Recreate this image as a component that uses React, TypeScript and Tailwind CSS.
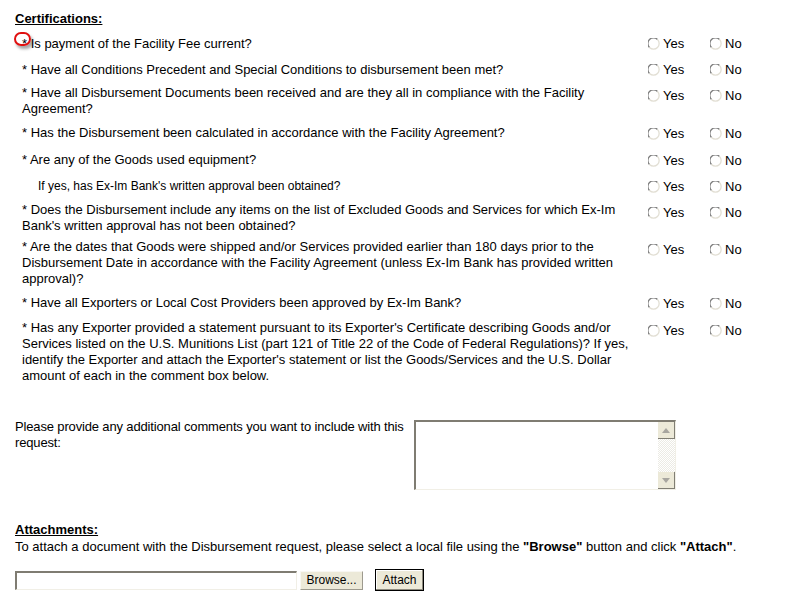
import React from 'react';

type Question = {
  text: string;
  small?: boolean;
  ro: number;
  pb: string;
};

const questions: Question[] = [
  { text: '* Is payment of the Facility Fee current?', ro: 2, pb: 'pb-[10px]' },
  {
    text: '* Have all Conditions Precedent and Special Conditions to disbursement been met?',
    ro: 2,
    pb: 'pb-[7px]',
  },
  {
    text: '* Have all Disbursement Documents been received and are they all in compliance with the Facility Agreement?',
    ro: 5,
    pb: 'pb-[8px]',
  },
  {
    text: '* Has the Disbursement been calculated in accordance with the Facility Agreement?',
    ro: 3,
    pb: 'pb-[10px]',
  },
  { text: '* Are any of the Goods used equipment?', ro: 3, pb: 'pb-[9px]' },
  { text: "If yes, has Ex-Im Bank's written approval been obtained?", small: true, ro: 3, pb: 'pb-[7px]' },
  {
    text: "* Does the Disbursement include any items on the list of Excluded Goods and Services for which Ex-Im Bank's written approval has not been obtained?",
    ro: 5,
    pb: 'pb-[5px]',
  },
  {
    text: '* Are the dates that Goods were shipped and/or Services provided earlier than 180 days prior to the Disbursement Date in accordance with the Facility Agreement (unless Ex-Im Bank has provided written approval)?',
    ro: 5,
    pb: 'pb-[8px]',
  },
  {
    text: '* Have all Exporters or Local Cost Providers been approved by Ex-Im Bank?',
    ro: 3,
    pb: 'pb-[8px]',
  },
  {
    text: "* Has any Exporter provided a statement pursuant to its Exporter's Certificate describing Goods and/or Services listed on the U.S. Munitions List (part 121 of Title 22 of the Code of Federal Regulations)? If yes, identify the Exporter and attach the Exporter's statement or list the Goods/Services and the U.S. Dollar amount of each in the comment box below.",
    ro: 5,
    pb: 'pb-[8px]',
  },
];

function Radio() {
  return (
    <svg width="12" height="12" viewBox="0 0 12 12" className="shrink-0">
      <circle cx="6" cy="6" r="5.5" fill="#ffffff" />
      <path d="M1.5 9.5 A5 5 0 0 1 9.5 1.5" fill="none" stroke="#7c7c7c" strokeWidth="1.3" />
      <path d="M9.5 1.5 A5 5 0 0 1 1.5 9.5" fill="none" stroke="#e2dfd4" strokeWidth="1.3" />
    </svg>
  );
}

function YesNo({ offset }: { offset: number }) {
  return (
    <div className="flex items-start" style={{ marginTop: offset - 2 }}>
      <div className="flex items-center w-[62px]">
        <Radio />
        <span className="ml-[3px]">Yes</span>
      </div>
      <div className="flex items-center">
        <Radio />
        <span className="ml-[3px]">No</span>
      </div>
    </div>
  );
}

function Arrow({ up }: { up?: boolean }) {
  return (
    <svg width="8" height="5" viewBox="0 0 8 5">
      <polygon points={up ? '0,5 8,5 4,0' : '0,0 8,0 4,5'} fill="#a8a6a0" />
    </svg>
  );
}

export default function App() {
  return (
    <div className="relative min-h-screen bg-white text-black pl-[15px] pt-[11px] text-[13px] leading-[16px] font-['Liberation_Sans',Arial,sans-serif]">
      <div className="font-bold underline">Certifications:</div>

      {/* Red annotation circle round first asterisk */}
      <div className="absolute left-[14px] top-[32px] w-[17px] h-[14px] rounded-full border-2 border-[#e01010] shadow-[2px_3px_3px_rgba(0,0,0,0.35)] pointer-events-none"></div>

      <div className="mt-[9px] flex flex-col">
        {questions.map((q, i) => (
          <div key={i} className={'flex ' + q.pb}>
            <div
              className={
                q.small
                  ? 'w-[633px] pl-[23px] text-[12px]'
                  : 'w-[633px] pl-[7px] pr-[10px]'
              }
            >
              {q.text}
            </div>
            <YesNo offset={q.ro} />
          </div>
        ))}
      </div>

      {/* Comments */}
      <div className="mt-[27px] flex items-start">
        <div className="w-[399px] tracking-[-0.15px]">
          Please provide any additional comments you want to include with this request:
        </div>
        <div className="flex w-[262px] h-[70px] mt-[1px] border-t-2 border-l-2 border-b border-r border-t-[#7f7c72] border-l-[#7f7c72] border-b-[#f1efe6] border-r-[#f1efe6] bg-white">
          <div className="flex-1"></div>
          <div className="w-[17px] flex flex-col bg-[repeating-conic-gradient(#ecebe4_0%_25%,#ffffff_0%_50%)] bg-[length:2px_2px]">
            <div className="h-[17px] flex items-center justify-center bg-[#ece9d8] border-r border-b border-[#807e74]">
              <Arrow up />
            </div>
            <div className="flex-1"></div>
            <div className="h-[17px] flex items-center justify-center bg-[#ece9d8] border-r border-b border-[#807e74]">
              <Arrow />
            </div>
          </div>
        </div>
      </div>

      {/* Attachments */}
      <div className="mt-[32px] font-bold underline">Attachments:</div>
      <div className="mt-[1px]">
        To attach a document with the Disbursement request, please select a local file using the{' '}
        <b>"Browse"</b> button and click <b>"Attach"</b>.
      </div>

      <div className="mt-[14px] flex items-center">
        <div className="w-[282px] h-[19px] border-t-2 border-l-2 border-b border-r border-t-[#7f7c72] border-l-[#7f7c72] border-b-[#f1efe6] border-r-[#f1efe6] bg-white"></div>
        <button className="ml-[3px] w-[63px] h-[19px] flex items-center justify-center bg-[#ece9d8] border border-[#f8f7f2] border-r-[#9d9a8e] border-b-[#9d9a8e] text-[12px] leading-[14px]">
          Browse...
        </button>
        <button className="ml-[12px] w-[49px] h-[22px] flex items-center justify-center bg-[#ece9d8] border border-black shadow-[inset_-1px_-1px_0_#8d8a7e,inset_1px_1px_0_#ffffff] text-[12px] leading-[14px]">
          Attach
        </button>
      </div>
    </div>
  );
}
